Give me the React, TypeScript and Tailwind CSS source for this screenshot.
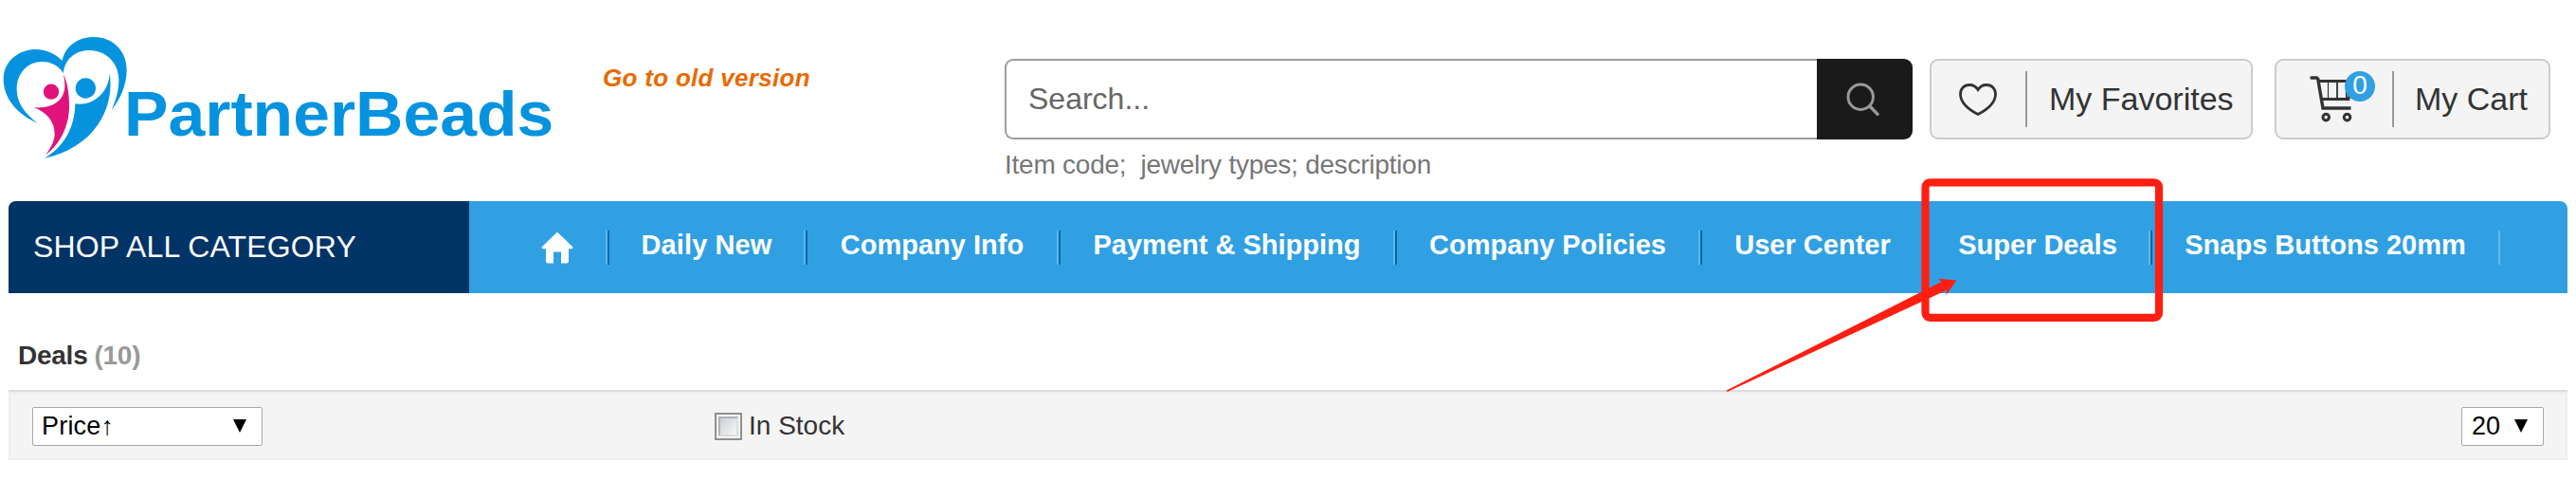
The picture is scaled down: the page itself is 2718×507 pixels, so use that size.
import { useState } from "react";
import clsx from "clsx";

const NAV_ITEMS = [
  { label: "Daily New", width: "w-[209px]" },
  { label: "Company Info", width: "w-[267px]" },
  { label: "Payment & Shipping", width: "w-[355px]" },
  { label: "Company Policies", width: "w-[322px]" },
  { label: "User Center", width: "w-[237px]" },
  { label: "Super Deals", width: "w-[238px]" },
  { label: "Snaps Buttons 20mm", width: "w-[369px]" },
];

function Logo() {
  return (
    <svg viewBox="27 0 1773 480" className="mt-5 h-40 w-[591px] shrink-0">
      <g fill="#0593e0">
        <path d="M224 132C201 108 170 96 138 96C80 98 38 138 38 190C38 252 82 302 146 330C108 300 80 268 80 222C80 170 116 135 160 135C190 135 214 149 228 172C230 130 264 99 310 99C365 99 403 142 403 192C403 222 396 254 380 288C408 254 428 210 428 160C428 102 384 57 325 57C272 57 232 88 224 132Z" />
        <circle cx="298" cy="219" r="32" />
        <path d="M374 170C372 236 318 276 265 268C264 346 226 408 168 440C318 408 392 290 374 170Z" />
        <text
          x="420"
          y="369"
          fontSize="201"
          fontWeight="bold"
          textLength="1360"
          lengthAdjust="spacingAndGlyphs"
        >
          PartnerBeads
        </text>
      </g>
      <g fill="#e0127c">
        <circle cx="189" cy="230" r="24.5" />
        <path d="M228 175C240 200 246 236 246 276C246 340 216 396 172 430C190 404 200 384 200 364C200 328 178 296 135 280C186 284 230 264 232 214C233 200 230 190 228 175Z" />
      </g>
    </svg>
  );
}

function SearchIcon() {
  return (
    <svg viewBox="0 0 36 36" className="h-9 w-9" fill="none" stroke="#999" strokeWidth="3">
      <circle cx="15.2" cy="15.2" r="13.2" />
      <path d="M24.2 24.2L34 34.4" strokeWidth="3.4" />
    </svg>
  );
}

function HeartIcon() {
  return (
    <svg viewBox="0 0 40 34" className="h-[34px] w-10" fill="none" stroke="#333" strokeWidth="2.8">
      <path d="M20 6.6C17.8 3.2 14.8 1.5 11.2 1.5C5.2 1.5 1.5 5.6 1.5 11.2C1.5 20.4 10.6 27.6 20 32.5C29.4 27.6 38.5 20.4 38.5 11.2C38.5 5.6 34.8 1.5 28.8 1.5C25.2 1.5 22.2 3.2 20 6.6Z" />
    </svg>
  );
}

function CartIcon() {
  return (
    <svg viewBox="0 0 48 50" className="h-[50px] w-12" fill="none" stroke="#333">
      <path d="M2 2H7.5" strokeWidth="3.6" strokeLinecap="round" />
      <path d="M8.5 2L14 34H43.5" strokeWidth="3.4" />
      <path d="M9 5.5H45L41 24.5H12" strokeWidth="2.8" />
      <path d="M19.5 6V24" strokeWidth="1.2" />
      <path d="M29 6V24M38.8 6V24" strokeWidth="1.8" />
      <circle cx="17.2" cy="43.6" r="3.3" strokeWidth="3" />
      <circle cx="39.5" cy="43.6" r="3.3" strokeWidth="3" />
    </svg>
  );
}

function HomeIcon() {
  return (
    <svg viewBox="0 0 34 34" className="h-[34px] w-[34px]" fill="#fff">
      <path d="M17 0.5L33.5 16.5Q33.5 18.2 32 18.2H29V31.5Q29 33.5 27 33.5H21V21.5H13V33.5H7Q5 33.5 5 31.5V18.2H2Q0.5 18.2 0.5 16.5Z" />
    </svg>
  );
}

function Caret() {
  return (
    <svg viewBox="0 0 14 14" className="h-3.5 w-3.5">
      <path d="M0 0H14L7 14Z" />
    </svg>
  );
}

function Header() {
  const [query, setQuery] = useState("");

  return (
    <header className="flex h-[212px] items-start">
      <Logo />
      <a
        href="#"
        className="ml-[45px] mt-[67px] w-[380px] text-[26px] leading-[31px] font-bold tracking-[0.3px] text-[#e86a00] italic"
      >
        Go to old version
      </a>
      <div className="ml-[44px] mt-[62px] w-[958px]">
        <form className="flex h-[85px]">
          <input
            value={query}
            onChange={(e) => setQuery(e.target.value)}
            placeholder="Search..."
            className="w-[857px] rounded-l-[9px] border-2 border-r-0 border-[#9d9d9d] bg-white pb-0.5 pl-[23px] text-[32px] placeholder:text-[#666]"
          />
          <button
            type="button"
            aria-label="Search"
            className="flex flex-1 justify-center rounded-r-[9px] bg-[#1a1a1a] pt-[25px] pr-1"
          >
            <SearchIcon />
          </button>
        </form>
        <p className="mt-[11px] text-[28px] leading-8 tracking-[-0.24px] whitespace-pre text-[#777]">
          {"Item code;  jewelry types; description"}
        </p>
      </div>
      <a
        href="#"
        className="ml-[18px] mt-[62px] flex h-[85px] w-[341px] items-center rounded-[9px] border-2 border-[#ccc] bg-[#f4f4f4] pl-[29px] text-[34px] text-[#333]"
      >
        <HeartIcon />
        <span className="ml-[30px] h-[59px] w-0.5 bg-[#999]" />
        <span className="ml-[23px] whitespace-nowrap">My Favorites</span>
      </a>
      <a
        href="#"
        className="ml-[23px] mt-[62px] flex h-[85px] w-[291px] items-center rounded-[9px] border-2 border-[#ccc] bg-[#f4f4f4] pl-[35px] text-[34px] text-[#333]"
      >
        <span className="relative">
          <CartIcon />
          <span className="absolute -top-[5px] left-[37px] flex h-8 w-8 items-center justify-center rounded-full bg-[#31a0e3] pb-0.5 text-[28px] leading-none text-white">
            0
          </span>
        </span>
        <span className="ml-[39px] h-[59px] w-0.5 bg-[#999]" />
        <span className="ml-[22px] whitespace-nowrap">My Cart</span>
      </a>
    </header>
  );
}

// Hand-drawn style marker around the "Super Deals" entry
function Callout() {
  return (
    <svg
      viewBox="1820 186 466 230"
      className="pointer-events-none absolute top-[186px] left-[1820px] h-[230px] w-[466px]"
    >
      <rect
        x="2031.5"
        y="192.3"
        width="246.5"
        height="142.5"
        rx="5"
        fill="none"
        stroke="#ff1f12"
        strokeWidth="8.2"
      />
      <path
        d="M1821.6 411.4L2048.5 297L2045.3 293.8L2064.4 295.6L2053.4 311L2054 305.8L1822.6 413Z"
        fill="#ff1f12"
      />
    </svg>
  );
}

function NavBar() {
  return (
    <nav className="mx-[9px] flex h-[97px] overflow-hidden rounded-t-lg bg-[#31a0e3] text-white">
      <div className="flex w-[486px] items-center bg-[#003366] pb-px pl-[26px] text-[32px] tracking-[0.15px]">
        SHOP ALL CATEGORY
      </div>
      <div className="flex items-center">
        <a
          href="#"
          aria-label="Home"
          className="flex h-9 w-[146px] items-center justify-end border-r-2 border-[#5cb8f2] pr-[34px]"
        >
          <HomeIcon />
        </a>
        {NAV_ITEMS.map((item, i) => (
          <a
            key={item.label}
            href="#"
            className={clsx(
              "flex h-9 items-center justify-center border-r-2 border-l-2 border-r-[#5cb8f2] border-l-[#0368ab] pb-[3px] text-[29px] font-bold whitespace-nowrap",
              i === 0 && "tracking-[0.1px]",
              item.width,
            )}
          >
            {item.label}
          </a>
        ))}
      </div>
    </nav>
  );
}

function FilterBar() {
  const [inStock, setInStock] = useState(false);

  return (
    <div className="mx-[9px] h-[74px] border-t-2 border-[#ddd]">
      <div className="flex h-[72px] items-center border-2 border-[#eee] bg-[#f4f4f4] px-[23px]">
        <button
          type="button"
          className="flex h-[41px] w-[243px] items-center justify-between rounded-[2px] border border-[#a9a9a9] bg-white pr-4 pl-[9px] text-[27px] leading-none text-black"
        >
          <span className="tracking-[0.2px]">Price↑</span>
          <Caret />
        </button>
        <button
          type="button"
          onClick={() => setInStock(!inStock)}
          className="ml-[477px] flex items-center gap-[7px] text-[28px] text-[#333]"
        >
          <span className="block h-[29px] w-[29px] border-2 border-[#8e8f8f] bg-[#f4f4f4] p-0.5">
            <span
              className={clsx(
                "block h-full w-full border-2 border-t-[#aeb3b9] border-r-[#dcdcdc] border-b-[#dcdcdc] border-l-[#aeb3b9] bg-linear-to-br from-[#cbcfd5] to-[#f8f8f8]",
                inStock && "bg-[#4b6cb7]",
              )}
            />
          </span>
          In Stock
        </button>
        <button
          type="button"
          className="ml-auto flex h-[41px] w-[87px] items-center justify-between rounded-[2px] border border-[#a9a9a9] bg-white pr-4 pl-[10px] text-[27px] leading-none text-black"
        >
          20
          <Caret />
        </button>
      </div>
    </div>
  );
}

export default function App() {
  return (
    <div className="relative h-[507px] w-[2718px] overflow-hidden bg-white font-['Liberation_Sans',Arial,sans-serif]">
      <Header />
      <NavBar />
      <h1 className="flex h-[102px] items-center gap-[7px] pb-px pl-[19px] pt-[31px] text-[28px] font-bold tracking-[-0.25px] text-[#333]">
        Deals <span className="text-[#999]">(10)</span>
      </h1>
      <FilterBar />
      <Callout />
    </div>
  );
}
